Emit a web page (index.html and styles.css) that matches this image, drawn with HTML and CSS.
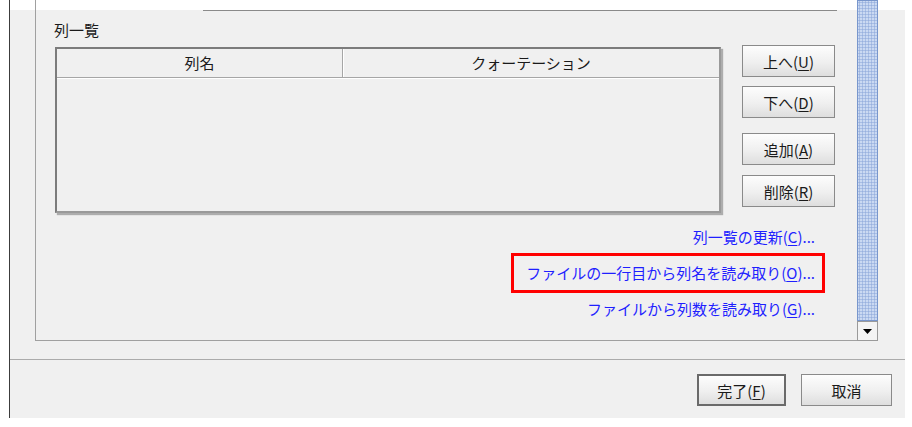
FILE: index.html
```html
<!DOCTYPE html>
<html>
<head>
	<title>列一覧</title>
	<link rel="stylesheet" href="styles.css">
</head>
<body>
	<div class="window">
		<div class="main">
			<div class="viewport">
				<div class="band"></div>
				<div class="band-line"></div>
				<div class="group">
					<div class="group-title">列一覧</div>
					<div class="list-row">
						<div class="table">
							<div class="table-head">
								<div class="th th-name">列名</div>
								<div class="th th-quote">クォーテーション</div>
							</div>
							<div class="table-body"></div>
						</div>
						<div class="side-buttons">
							<button class="btn">上へ(<u>U</u>)</button>
							<button class="btn btn-down">下へ(<u>D</u>)</button>
							<button class="btn btn-add">追加(<u>A</u>)</button>
							<button class="btn btn-del">削除(<u>R</u>)</button>
						</div>
					</div>
					<div class="links">
						<a href="#" class="link">列一覧の更新(<u>C</u>)...</a>
						<a href="#" class="link highlight">ファイルの一行目から列名を読み取り(<u>O</u>)...</a>
						<a href="#" class="link">ファイルから列数を読み取り(<u>G</u>)...</a>
					</div>
				</div>
			</div>
			<div class="scrollbar">
				<div class="thumb"></div>
				<div class="arrow-down">
					<svg width="9" height="5" viewBox="0 0 9 5"><path d="M0 0H9L4.5 5Z" fill="#000"/></svg>
				</div>
			</div>
		</div>
		<div class="footer">
			<button class="btn btn-footer btn-default">完了(<u>F</u>)</button>
			<button class="btn btn-footer">取消</button>
		</div>
	</div>
</body>
</html>
```

FILE: styles.css
```css
* {
	margin: 0;
	padding: 0;
	box-sizing: border-box;
}

body {
	font-family: "Noto Sans CJK JP", "Noto Sans", sans-serif;
	font-size: 15px;
	color: #1a1a1a;
	background: #fff;
}

.window {
	margin-left: 9px;
	width: 896px;
	height: 418px;
	background: #f0f0f0;
	border-left: 1px solid #3c3c3c;
	display: flex;
	flex-direction: column;
}

.main {
	height: 359px;
	padding-left: 25px;
	display: flex;
	align-items: flex-start;
	background: linear-gradient(#fff 0, #fff 10px, #f0f0f0 10px);
}

.viewport {
	width: 822px;
	height: 341px;
	border-left: 1px solid #a0a0a0;
	border-bottom: 1px solid #a0a0a0;
}

.band {
	height: 10px;
}

.band-line {
	margin-left: 167px;
	width: 634px;
	height: 1px;
	background: #8a8a8a;
}

.group {
	padding-left: 18px;
	padding-right: 21px;
}

.group-title {
	margin-top: 9px;
	line-height: 20px;
}

.list-row {
	margin-top: 5px;
	display: flex;
	align-items: flex-start;
	gap: 21px;
}

/* table */
.table {
	margin-top: 2px;
	margin-left: 1px;
	width: 666px;
	height: 166px;
	border: 2px solid;
	border-color: #7c7c7c #9a9a9a #9a9a9a #7c7c7c;
	box-shadow: 2px 2px 1px rgba(0, 0, 0, 0.28);
	background: #f0f0f0;
}

.table-head {
	display: flex;
	height: 29px;
	border-bottom: 1px solid #a6a6a6;
	box-shadow: 0 1px 0 #fff;
}

.th {
	line-height: 27px;
	text-align: center;
}

.th-name {
	width: 286px;
	border-right: 1px solid #a6a6a6;
	box-shadow: 1px 0 0 #fff;
}

.th-quote {
	flex: 1;
}

/* buttons */
.btn {
	font-family: inherit;
	font-size: 15px;
	color: #1a1a1a;
	border: 1px solid #8a8a8a;
	background: linear-gradient(#fdfdfd, #efefef 55%, #dedede);
	cursor: pointer;
}

.btn u {
	text-decoration-thickness: 1px;
	text-underline-offset: 2px;
}

.side-buttons {
	display: flex;
	flex-direction: column;
}

.side-buttons .btn {
	width: 93px;
	height: 32px;
}

.side-buttons .btn-down {
	margin-top: 9px;
}

.side-buttons .btn-add {
	margin-top: 15px;
}

.side-buttons .btn-del {
	margin-top: 10px;
}

/* links */
.links {
	margin-top: 14px;
	padding-right: 21px;
	display: flex;
	flex-direction: column;
	align-items: flex-end;
	gap: 16px;
}

.link {
	display: block;
	line-height: 20px;
	color: #1f1fff;
	text-decoration: none;
}

.link u {
	text-underline-offset: 2px;
}

.highlight {
	border: 3px solid #ff0000;
	padding: 7px 7px 7px 12px;
	margin: -10px -10px -10px -15px;
}

/* scrollbar */
.scrollbar {
	width: 21px;
	height: 341px;
	display: flex;
	flex-direction: column;
}

.thumb {
	flex: 1;
	border: 1px solid #7896cc;
	background-color: #cad9f2;
	background-image: radial-gradient(#98b1de 0.9px, transparent 1.2px);
	background-size: 3px 3px;
}

.arrow-down {
	height: 20px;
	border: 1px solid #9a9a9a;
	background: #f4f4f4;
	display: flex;
	align-items: center;
	justify-content: center;
}

/* footer */
.footer {
	flex: 1;
	border-top: 1px solid #ababab;
	padding: 14px 13px 0 0;
	display: flex;
	justify-content: flex-end;
	align-items: flex-start;
	gap: 15px;
}

.btn-footer {
	width: 91px;
	height: 32px;
}

.btn-default {
	width: 89px;
	border: 2px solid #6a6a6a;
}
```
